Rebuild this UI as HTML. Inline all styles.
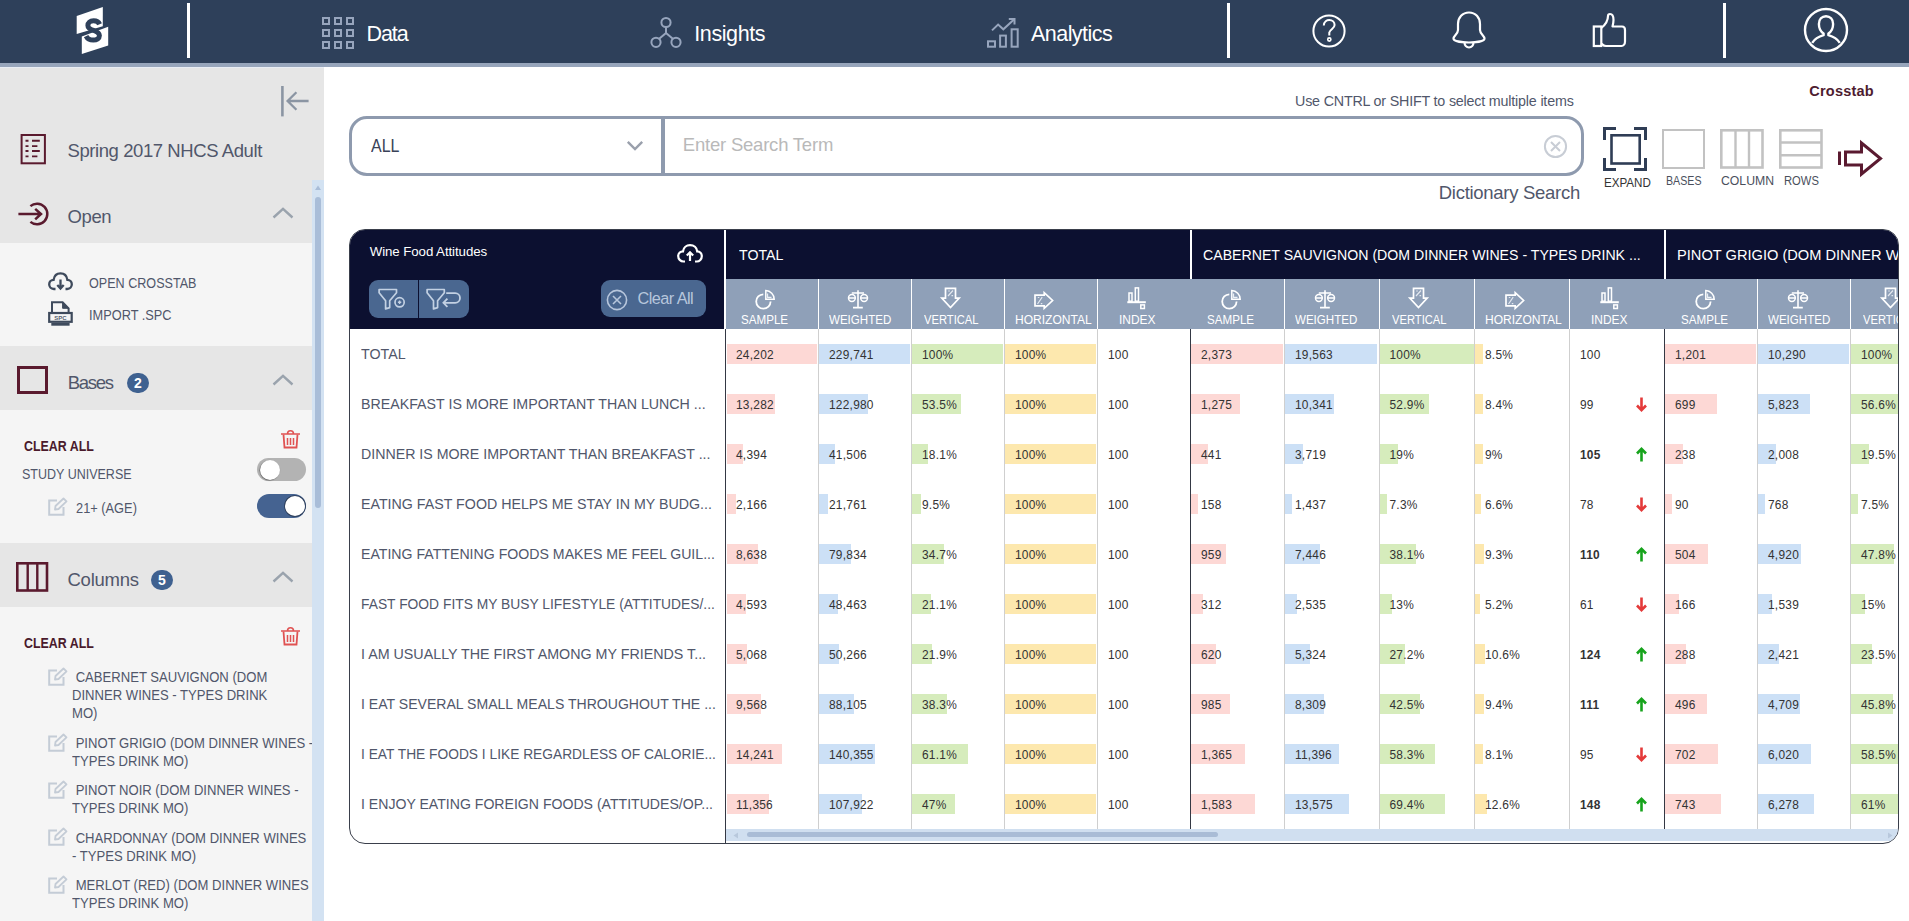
<!DOCTYPE html>
<html><head><meta charset="utf-8"><title>Crosstab</title>
<style>
*{box-sizing:border-box;margin:0;padding:0}
html,body{width:1909px;height:921px;overflow:hidden;background:#fff;font-family:"Liberation Sans", sans-serif;}
.t{position:absolute;line-height:1;white-space:nowrap;}
.a{position:absolute;}
svg{position:absolute;overflow:visible}
</style></head>
<body>
<div class="a" style="left:0;top:0;width:1909px;height:63px;background:#2e405a"></div>
<div class="a" style="left:0;top:63px;width:1909px;height:4px;background:#97a5bb"></div>
<svg style="left:76px;top:7px" width="33" height="48" viewBox="0 0 33 48">
<polygon points="0.7,9.1 26.8,0.1 26.8,19.3 0.7,27" fill="#fff"/>
<polygon points="5.8,29.4 32.2,19.8 32.2,38.6 5.8,47" fill="#fff"/>
<path d="M23.6,17.2 C22.6,14.8 20.4,13.7 17.6,13.7 C14,13.7 11.9,15.7 11.9,18.4 C11.9,21.5 15,22.5 17.6,23.3 C21,24.4 23.4,25.6 23.4,28.6 C23.4,31.4 20.8,33.1 17.3,33.1 C14,33.1 11.4,31.7 10.1,29.1" fill="none" stroke="#2e405a" stroke-width="5"/>
</svg>
<div class="a" style="left:187px;top:3px;width:3px;height:55px;background:#fff"></div>
<div class="a" style="left:1227px;top:3px;width:3px;height:55px;background:#fff"></div>
<div class="a" style="left:1723px;top:3px;width:3px;height:55px;background:#fff"></div>
<svg style="left:322px;top:17px" width="32" height="32" viewBox="0 0 32 32"><rect x="1" y="1" width="6" height="6" fill="none" stroke="#97a5bd" stroke-width="2"/><rect x="1" y="13" width="6" height="6" fill="none" stroke="#97a5bd" stroke-width="2"/><rect x="1" y="25" width="6" height="6" fill="none" stroke="#97a5bd" stroke-width="2"/><rect x="13" y="1" width="6" height="6" fill="none" stroke="#97a5bd" stroke-width="2"/><rect x="13" y="13" width="6" height="6" fill="none" stroke="#97a5bd" stroke-width="2"/><rect x="13" y="25" width="6" height="6" fill="none" stroke="#97a5bd" stroke-width="2"/><rect x="25" y="1" width="6" height="6" fill="none" stroke="#97a5bd" stroke-width="2"/><rect x="25" y="13" width="6" height="6" fill="none" stroke="#97a5bd" stroke-width="2"/><rect x="25" y="25" width="6" height="6" fill="none" stroke="#97a5bd" stroke-width="2"/></svg>
<div class="t" style="left:366.6px;top:23.73px;font-size:21.5px;color:#fff;font-weight:normal;letter-spacing:-1.141px;">Data</div>
<svg style="left:650px;top:17px" width="32" height="31" viewBox="0 0 32 31">
<circle cx="16" cy="5.5" r="4.6" fill="none" stroke="#97a5bd" stroke-width="2"/>
<circle cx="6" cy="25.3" r="4.6" fill="none" stroke="#97a5bd" stroke-width="2"/>
<circle cx="26" cy="25.3" r="4.6" fill="none" stroke="#97a5bd" stroke-width="2"/>
<path d="M16,10.2 V16 L9.2,21.8 M16,16 L22.8,21.8" fill="none" stroke="#97a5bd" stroke-width="2"/>
</svg>
<div class="t" style="left:694.3px;top:23.73px;font-size:21.5px;color:#fff;font-weight:normal;letter-spacing:-0.416px;">Insights</div>
<svg style="left:987px;top:17px" width="33" height="32" viewBox="0 0 33 32">
<rect x="1" y="24.3" width="7" height="5.4" fill="none" stroke="#97a5bd" stroke-width="2"/>
<rect x="13.1" y="18.6" width="5.8" height="11.1" fill="none" stroke="#97a5bd" stroke-width="2"/>
<rect x="24.6" y="12.3" width="6.1" height="17.4" fill="none" stroke="#97a5bd" stroke-width="2"/>
<path d="M5,13.4 L11.1,7.6 L16.3,12.3 L27,2.4" fill="none" stroke="#97a5bd" stroke-width="2"/>
<path d="M21.8,1.9 H27.5 V7.6" fill="none" stroke="#97a5bd" stroke-width="2"/>
</svg>
<div class="t" style="left:1031px;top:23.73px;font-size:21.5px;color:#fff;font-weight:normal;letter-spacing:-0.543px;">Analytics</div>
<svg style="left:1312px;top:14px" width="34" height="34" viewBox="0 0 34 34">
<circle cx="17" cy="17" r="15.6" fill="none" stroke="#fff" stroke-width="2"/>
<path d="M11.8,11.5 C12,7.5 15,6 17.3,6 C20.5,6 22.6,8.3 22.6,11 C22.6,14.5 18.3,15 17.3,18.5 V21.5" fill="none" stroke="#fff" stroke-width="2"/>
<circle cx="17.3" cy="25.5" r="1.6" fill="none" stroke="#fff" stroke-width="1.6"/>
</svg>
<svg style="left:1452px;top:11px" width="34" height="38" viewBox="0 0 34 38">
<path d="M17,1.5 C10.5,1.5 6,6.5 6,13 V19 C6,23 1.5,24.5 1.5,27.5 C1.5,30 9,31.5 17,31.5 C25,31.5 32.5,30 32.5,27.5 C32.5,24.5 28,23 28,19 V13 C28,6.5 23.5,1.5 17,1.5 Z" fill="none" stroke="#fff" stroke-width="2.2"/>
<path d="M12.5,31.3 C12.5,34.5 14.5,36.5 17,36.5 C19.5,36.5 21.5,34.5 21.5,31.3" fill="none" stroke="#fff" stroke-width="2.2"/>
</svg>
<svg style="left:1592px;top:13px" width="35" height="35" viewBox="0 0 35 35">
<rect x="1.8" y="13.5" width="7.5" height="19.5" fill="none" stroke="#fff" stroke-width="2.2"/>
<path d="M9.3,15 C13,12 16,8 16,3 C16,1.5 17,1 18,1 C20.5,1 21.5,4 21.5,7 C21.5,9 21,11.5 20.5,13.5 H30 C32,13.5 33,15 33,17 V28.5 C33,31 31.5,33 29.5,33 H14 C11.5,33 10.5,31.5 9.3,30.5" fill="none" stroke="#fff" stroke-width="2.2" stroke-linejoin="round"/>
</svg>
<svg style="left:1803px;top:7px" width="46" height="46" viewBox="0 0 46 46">
<circle cx="23" cy="23" r="21" fill="none" stroke="#fff" stroke-width="2.4"/>
<path d="M9.2,35.9 C12,31.5 17,29.2 20.6,28.2 V26.4 C18,24.8 15.9,21 15.9,17 C15.9,12.4 18.8,9.3 23,9.3 C27.2,9.3 30.1,12.4 30.1,17 C30.1,21 28,24.8 25.4,26.4 V28.2 C29,29.2 34,31.5 36.8,35.9" fill="none" stroke="#fff" stroke-width="2.4" stroke-linejoin="round"/>
</svg>
<div class="a" style="left:0;top:67px;width:324px;height:854px;background:#e6e6e6"></div>
<div class="a" style="left:0;top:67px;width:324px;height:1px;background:#e9edf4"></div>
<svg style="left:280px;top:85px" width="30" height="32" viewBox="0 0 30 32">
<path d="M2.4,1 V31.4" stroke="#8b95a3" stroke-width="2.6" fill="none"/>
<path d="M8,16 H28.6 M16.4,7.2 L7.6,16 L16.4,24.8" stroke="#8b95a3" stroke-width="2.3" fill="none"/>
</svg>
<svg style="left:20px;top:134px" width="26" height="30" viewBox="0 0 26 30">
<rect x="1.6" y="1" width="23.3" height="28.3" fill="none" stroke="#5a1a2e" stroke-width="2"/>
<path d="M5.5,6.8 H8.5 M12,6.8 H19.8 M5.5,12.1 H8.5 M12,12.1 H17.4 M5.5,17 H8.5 M12,17 H19.8 M5.5,22.4 H8.5 M12,22.4 H17.4" stroke="#5a1a2e" stroke-width="1.9" fill="none"/>
</svg>
<div class="t" style="left:67.5px;top:141.58px;font-size:18.5px;color:#51576b;font-weight:normal;letter-spacing:-0.42px;">Spring 2017 NHCS Adult</div>
<svg style="left:17px;top:201px" width="32" height="26" viewBox="0 0 32 26">
<path d="M13.4,5.1 A10.3,10.3 0 1 1 13.4,20.9" fill="none" stroke="#5a1a2e" stroke-width="2.5"/>
<path d="M1.4,13 H24 M18.2,7.9 L24,13 L18.2,18.3" fill="none" stroke="#5a1a2e" stroke-width="2.5"/>
</svg>
<div class="t" style="left:67.5px;top:207.58px;font-size:18.5px;color:#51576b;font-weight:normal;letter-spacing:-0.389px;">Open</div>
<svg style="left:272px;top:207px" width="22" height="12" viewBox="0 0 22 12"><path d="M1.5,10.5 L11,1.8 L20.5,10.5" fill="none" stroke="#9aa3ad" stroke-width="2.4"/></svg>
<div class="a" style="left:0;top:243px;width:324px;height:103px;background:#f5f5f5"></div>
<svg style="left:47px;top:271px" width="27" height="20" viewBox="0 0 27 20">
<path d="M8.5,18 H6.8 C3.9,18 2.2,15.8 2.2,13.3 C2.2,10.7 4.2,8.8 6.6,8.8 C7.2,4.8 10,2.3 13.5,2.3 C17,2.3 19.8,4.8 20.4,8.8 C22.8,8.8 24.8,10.7 24.8,13.3 C24.8,15.8 23.1,18 20.2,18 H18.5" fill="none" stroke="#3e4a5c" stroke-width="2.3"/>
<path d="M13.5,8.5 V17.5 M10.3,14 L13.5,17.5 L16.7,14" fill="none" stroke="#3e4a5c" stroke-width="2.3"/>
</svg>
<div class="t" style="left:88.6px;top:276.87px;font-size:13.8px;color:#51576b;font-weight:normal;letter-spacing:0px;transform:scaleX(0.9125);transform-origin:0 0;">OPEN CROSSTAB</div>
<svg style="left:47px;top:300px" width="27" height="27" viewBox="0 0 27 27">
<path d="M5,12.5 V2.3 H15.6 L21.6,8.3 V12.5" fill="none" stroke="#3e4a5c" stroke-width="2"/>
<path d="M15.6,2.5 V8.3 H21.4 Z" fill="#3e4a5c" stroke="#3e4a5c" stroke-width="1"/>
<rect x="2.2" y="13" width="22.5" height="8.8" fill="none" stroke="#3e4a5c" stroke-width="2.2"/>
<rect x="4.3" y="23" width="18.3" height="2.7" fill="#3e4a5c"/>
<text x="13.5" y="20.3" font-family="Liberation Sans" font-weight="bold" font-size="6" text-anchor="middle" fill="#55606f">SPC</text>
</svg>
<div class="t" style="left:88.6px;top:309.07px;font-size:13.8px;color:#51576b;font-weight:normal;letter-spacing:0px;transform:scaleX(0.9260);transform-origin:0 0;">IMPORT .SPC</div>
<div class="a" style="left:17px;top:366px;width:31px;height:28px;border:3px solid #5a1a2e"></div>
<div class="t" style="left:67.7px;top:373.77px;font-size:18.5px;color:#51576b;font-weight:normal;letter-spacing:-1.28px;">Bases</div>
<div class="a" style="left:127px;top:373px;width:22px;height:20px;border-radius:10px;background:#3f6190;color:#fff;font:bold 14px/20px 'Liberation Sans';text-align:center">2</div>
<svg style="left:272px;top:373.5px" width="22" height="12" viewBox="0 0 22 12"><path d="M1.5,10.5 L11,1.8 L20.5,10.5" fill="none" stroke="#9aa3ad" stroke-width="2.4"/></svg>
<div class="a" style="left:0;top:410px;width:324px;height:133px;background:#f5f5f5"></div>
<div class="t" style="left:24px;top:439.87px;font-size:13.8px;color:#4a1a2c;font-weight:bold;letter-spacing:0px;transform:scaleX(0.8987);transform-origin:0 0;">CLEAR ALL</div>
<svg style="left:280px;top:429.5px" width="21" height="19" viewBox="0 0 21 19">
<path d="M1,4 H20 M7.5,4 C7.5,1.5 8.5,0.8 10.5,0.8 C12.5,0.8 13.5,1.5 13.5,4" fill="none" stroke="#e05252" stroke-width="1.6"/>
<path d="M3.5,4.5 L4.5,17.5 H16.5 L17.5,4.5" fill="none" stroke="#e05252" stroke-width="1.8"/>
<path d="M7.5,8 V15 M10.5,8 V15 M13.5,8 V15" fill="none" stroke="#e05252" stroke-width="1.5"/>
</svg>
<div class="t" style="left:22.3px;top:467.77px;font-size:13.8px;color:#51576b;font-weight:normal;letter-spacing:0px;transform:scaleX(0.9066);transform-origin:0 0;">STUDY UNIVERSE</div>
<div class="a" style="left:257px;top:458px;width:49px;height:23px;border-radius:12px;background:#b3b3b3"></div>
<div class="a" style="left:259.5px;top:459.5px;width:20px;height:20px;border-radius:50%;background:#fff;box-shadow:-0.5px 0.5px 1px rgba(0,0,0,.5)"></div>
<svg style="left:47.5px;top:497px" width="20" height="19" viewBox="0 0 20 19">
<path d="M9,3.5 H1.2 V17.8 H15.5 V10" fill="none" stroke="#c4ccd6" stroke-width="2"/>
<path d="M7,12.5 L7.5,9 L15.5,1.5 L18.5,4.3 L10.5,12 Z" fill="none" stroke="#c4ccd6" stroke-width="1.8" stroke-linejoin="round"/>
</svg>
<div class="t" style="left:75.8px;top:502.17px;font-size:13.8px;color:#51576b;font-weight:normal;letter-spacing:0px;transform:scaleX(0.9289);transform-origin:0 0;">21+ (AGE)</div>
<div class="a" style="left:257px;top:494px;width:49px;height:24px;border-radius:12px;background:#456391"></div>
<div class="a" style="left:284.5px;top:496px;width:20px;height:20px;border-radius:50%;background:#fff;box-shadow:0 0 0 0.8px #2a3a55"></div>
<svg style="left:16px;top:562px" width="33" height="30" viewBox="0 0 33 30">
<rect x="1.3" y="1.3" width="29.7" height="27.2" fill="none" stroke="#5a1a2e" stroke-width="2.6"/>
<path d="M11.7,1 V29 M21.3,1 V29" stroke="#5a1a2e" stroke-width="2.4" fill="none"/>
</svg>
<div class="t" style="left:67.5px;top:570.87px;font-size:18.5px;color:#51576b;font-weight:normal;letter-spacing:-0.25px;">Columns</div>
<div class="a" style="left:151px;top:570px;width:22px;height:20px;border-radius:10px;background:#3f6190;color:#fff;font:bold 14px/20px 'Liberation Sans';text-align:center">5</div>
<svg style="left:272px;top:570.5px" width="22" height="12" viewBox="0 0 22 12"><path d="M1.5,10.5 L11,1.8 L20.5,10.5" fill="none" stroke="#9aa3ad" stroke-width="2.4"/></svg>
<div class="a" style="left:0;top:607px;width:324px;height:314px;background:#f5f5f5"></div>
<div class="t" style="left:24px;top:636.97px;font-size:13.8px;color:#4a1a2c;font-weight:bold;letter-spacing:0px;transform:scaleX(0.8987);transform-origin:0 0;">CLEAR ALL</div>
<svg style="left:280px;top:626.5px" width="21" height="19" viewBox="0 0 21 19">
<path d="M1,4 H20 M7.5,4 C7.5,1.5 8.5,0.8 10.5,0.8 C12.5,0.8 13.5,1.5 13.5,4" fill="none" stroke="#e05252" stroke-width="1.6"/>
<path d="M3.5,4.5 L4.5,17.5 H16.5 L17.5,4.5" fill="none" stroke="#e05252" stroke-width="1.8"/>
<path d="M7.5,8 V15 M10.5,8 V15 M13.5,8 V15" fill="none" stroke="#e05252" stroke-width="1.5"/>
</svg>
<svg style="left:47.5px;top:666.5px" width="20" height="19" viewBox="0 0 20 19">
<path d="M9,3.5 H1.2 V17.8 H15.5 V10" fill="none" stroke="#c4ccd6" stroke-width="2"/>
<path d="M7,12.5 L7.5,9 L15.5,1.5 L18.5,4.3 L10.5,12 Z" fill="none" stroke="#c4ccd6" stroke-width="1.8" stroke-linejoin="round"/>
</svg>
<div class="t" style="left:71.8px;top:671.07px;font-size:13.8px;color:#51576b;font-weight:normal;letter-spacing:0px;transform:scaleX(0.9485);transform-origin:0 0;">&nbsp;CABERNET SAUVIGNON (DOM</div>
<div class="t" style="left:71.8px;top:688.97px;font-size:13.8px;color:#51576b;font-weight:normal;letter-spacing:0px;transform:scaleX(0.9485);transform-origin:0 0;">DINNER WINES - TYPES DRINK</div>
<div class="t" style="left:71.8px;top:706.87px;font-size:13.8px;color:#51576b;font-weight:normal;letter-spacing:0px;transform:scaleX(0.9485);transform-origin:0 0;">MO)</div>
<svg style="left:47.5px;top:732.5px" width="20" height="19" viewBox="0 0 20 19">
<path d="M9,3.5 H1.2 V17.8 H15.5 V10" fill="none" stroke="#c4ccd6" stroke-width="2"/>
<path d="M7,12.5 L7.5,9 L15.5,1.5 L18.5,4.3 L10.5,12 Z" fill="none" stroke="#c4ccd6" stroke-width="1.8" stroke-linejoin="round"/>
</svg>
<div class="t" style="left:71.8px;top:737.07px;font-size:13.8px;color:#51576b;font-weight:normal;letter-spacing:0px;transform:scaleX(0.9485);transform-origin:0 0;">&nbsp;PINOT GRIGIO (DOM DINNER WINES -</div>
<div class="t" style="left:71.8px;top:754.97px;font-size:13.8px;color:#51576b;font-weight:normal;letter-spacing:0px;transform:scaleX(0.9485);transform-origin:0 0;">TYPES DRINK MO)</div>
<svg style="left:47.5px;top:779.5px" width="20" height="19" viewBox="0 0 20 19">
<path d="M9,3.5 H1.2 V17.8 H15.5 V10" fill="none" stroke="#c4ccd6" stroke-width="2"/>
<path d="M7,12.5 L7.5,9 L15.5,1.5 L18.5,4.3 L10.5,12 Z" fill="none" stroke="#c4ccd6" stroke-width="1.8" stroke-linejoin="round"/>
</svg>
<div class="t" style="left:71.8px;top:784.07px;font-size:13.8px;color:#51576b;font-weight:normal;letter-spacing:0px;transform:scaleX(0.9485);transform-origin:0 0;">&nbsp;PINOT NOIR (DOM DINNER WINES -</div>
<div class="t" style="left:71.8px;top:801.97px;font-size:13.8px;color:#51576b;font-weight:normal;letter-spacing:0px;transform:scaleX(0.9485);transform-origin:0 0;">TYPES DRINK MO)</div>
<svg style="left:47.5px;top:827.3px" width="20" height="19" viewBox="0 0 20 19">
<path d="M9,3.5 H1.2 V17.8 H15.5 V10" fill="none" stroke="#c4ccd6" stroke-width="2"/>
<path d="M7,12.5 L7.5,9 L15.5,1.5 L18.5,4.3 L10.5,12 Z" fill="none" stroke="#c4ccd6" stroke-width="1.8" stroke-linejoin="round"/>
</svg>
<div class="t" style="left:71.8px;top:831.87px;font-size:13.8px;color:#51576b;font-weight:normal;letter-spacing:0px;transform:scaleX(0.9485);transform-origin:0 0;">&nbsp;CHARDONNAY (DOM DINNER WINES</div>
<div class="t" style="left:71.8px;top:849.77px;font-size:13.8px;color:#51576b;font-weight:normal;letter-spacing:0px;transform:scaleX(0.9485);transform-origin:0 0;">- TYPES DRINK MO)</div>
<svg style="left:47.5px;top:874.5px" width="20" height="19" viewBox="0 0 20 19">
<path d="M9,3.5 H1.2 V17.8 H15.5 V10" fill="none" stroke="#c4ccd6" stroke-width="2"/>
<path d="M7,12.5 L7.5,9 L15.5,1.5 L18.5,4.3 L10.5,12 Z" fill="none" stroke="#c4ccd6" stroke-width="1.8" stroke-linejoin="round"/>
</svg>
<div class="t" style="left:71.8px;top:879.07px;font-size:13.8px;color:#51576b;font-weight:normal;letter-spacing:0px;transform:scaleX(0.9485);transform-origin:0 0;">&nbsp;MERLOT (RED) (DOM DINNER WINES -</div>
<div class="t" style="left:71.8px;top:896.97px;font-size:13.8px;color:#51576b;font-weight:normal;letter-spacing:0px;transform:scaleX(0.9485);transform-origin:0 0;">TYPES DRINK MO)</div>
<div class="a" style="left:312px;top:180px;width:12px;height:741px;background:#d3e2f2"></div>
<div class="a" style="left:315px;top:197px;width:6px;height:311px;border-radius:3px;background:#a9bdd8"></div>
<svg style="left:315px;top:185px" width="6" height="5" viewBox="0 0 6 5"><polygon points="0,5 3,0.5 6,5" fill="#a9bdd8"/></svg>
<div class="t" style="left:1295px;top:94.34px;font-size:14.3px;color:#51576b;font-weight:normal;letter-spacing:-0.191px;">Use CNTRL or SHIFT to select multiple items</div>
<div class="t" style="left:1809.3px;top:84.17px;font-size:14.5px;color:#4e1c30;font-weight:bold;letter-spacing:0.206px;">Crosstab</div>
<div class="a" style="left:349px;top:116px;width:1235px;height:60px;border:3px solid #8e9aae;border-radius:18px;background:#fff"></div>
<div class="a" style="left:661px;top:117px;width:4px;height:58px;background:#8e9aae"></div>
<div class="t" style="left:371.3px;top:137.18px;font-size:18.5px;color:#3a4258;font-weight:normal;letter-spacing:0px;transform:scaleX(0.8626);transform-origin:0 0;">ALL</div>
<svg style="left:626px;top:140px" width="18" height="11" viewBox="0 0 18 11"><path d="M1.8,1.8 L9,9 L16.2,1.8" fill="none" stroke="#9aa0ac" stroke-width="2.4"/></svg>
<div class="t" style="left:682.8px;top:135.88px;font-size:18.5px;color:#b9b9b9;font-weight:normal;letter-spacing:-0.212px;">Enter Search Term</div>
<svg style="left:1543px;top:134px" width="25" height="25" viewBox="0 0 25 25">
<circle cx="12.5" cy="12.5" r="10.6" fill="none" stroke="#c8cdd5" stroke-width="2"/>
<path d="M8,8 L17,17 M17,8 L8,17" stroke="#c8cdd5" stroke-width="2"/></svg>
<div class="t" style="left:1438.8px;top:184.28px;font-size:18.5px;color:#51576b;font-weight:normal;letter-spacing:-0.288px;">Dictionary Search</div>
<svg style="left:1603px;top:127px" width="44" height="44" viewBox="0 0 44 44">
<path d="M1.5,13 V1.5 H13 M31,1.5 H42.5 V13 M42.5,31 V42.5 H31 M13,42.5 H1.5 V31" fill="none" stroke="#2f3d55" stroke-width="3"/>
<rect x="8.5" y="8.3" width="28.2" height="28.2" fill="none" stroke="#2f3d55" stroke-width="2.6"/>
</svg>
<div class="t" style="left:1604px;top:176.60px;font-size:12px;color:#333;font-weight:normal;letter-spacing:0px;transform:scaleX(0.9676);transform-origin:0 0;">EXPAND</div>
<div class="a" style="left:1662px;top:129px;width:43px;height:40px;border:2.6px solid #c2c2c2"></div>
<div class="t" style="left:1666.4px;top:174.50px;font-size:12px;color:#4a4f5c;font-weight:normal;letter-spacing:0px;transform:scaleX(0.8868);transform-origin:0 0;">BASES</div>
<svg style="left:1720px;top:129px" width="44" height="40" viewBox="0 0 44 40">
<rect x="1.3" y="1.3" width="41.2" height="37.2" fill="none" stroke="#c2c2c2" stroke-width="2.6"/>
<path d="M15.5,1 V39 M29,1 V39" stroke="#c2c2c2" stroke-width="2.4"/></svg>
<div class="t" style="left:1721px;top:174.70px;font-size:12px;color:#4a4f5c;font-weight:normal;letter-spacing:0px;transform:scaleX(1.0208);transform-origin:0 0;">COLUMN</div>
<svg style="left:1779px;top:129px" width="44" height="40" viewBox="0 0 44 40">
<rect x="1.3" y="1.3" width="41.2" height="37.2" fill="none" stroke="#c2c2c2" stroke-width="2.6"/>
<path d="M1,13.5 H43 M1,26.2 H43" stroke="#c2c2c2" stroke-width="2.4"/></svg>
<div class="t" style="left:1784.3px;top:174.70px;font-size:12px;color:#4a4f5c;font-weight:normal;letter-spacing:0px;transform:scaleX(0.9346);transform-origin:0 0;">ROWS</div>
<svg style="left:1837px;top:140px" width="46" height="38" viewBox="0 0 46 38">
<path d="M2.5,11.5 V25" stroke="#5a1a30" stroke-width="3"/>
<path d="M8.5,12 H24.5 V3 L43.5,18.5 L24.5,34 V25 H8.5 Z" fill="none" stroke="#5a1a30" stroke-width="3" stroke-linejoin="miter"/>
</svg>
<div class="a" style="left:349px;top:229px;width:1550px;height:615px;border-radius:16px;overflow:hidden;border:1px solid #3a3f4b;background:#fff">
<div class="a" style="left:-1px;top:-1px;width:375px;height:100px;background:#0c1030;"></div>
<div class="t" style="left:19.69999999999999px;top:14.50px;font-size:13.3px;color:#fff;font-weight:normal;letter-spacing:-0.083px;">Wine Food Attitudes</div>
<svg style="left:327px;top:14px" width="26" height="19" viewBox="0 0 26 19">
<path d="M8,17.5 H6.5 C3.5,17.5 1.2,15 1.2,12 C1.2,9 3.5,7.3 6,7.3 C6.5,3.5 9.5,1.2 13,1.2 C17,1.2 19.8,3.8 20.2,7.3 C23,7.3 24.8,9.5 24.8,12.2 C24.8,15 22.5,17.5 19.8,17.5 H18" fill="none" stroke="#fff" stroke-width="2.2"/>
<path d="M13,17 V8.5 M9.8,11.5 L13,8.3 L16.2,11.5" fill="none" stroke="#fff" stroke-width="2.2"/>
</svg>
<div class="a" style="left:19px;top:50px;width:100px;height:38px;background:#4a6790;border-radius:9px"></div>
<div class="a" style="left:68px;top:50px;width:1.2px;height:38px;background:#0c1030;"></div>
<svg style="left:28px;top:58px" width="30" height="24" viewBox="0 0 30 24">
<path d="M1.1,1.5 H18.5 V4.7 L11.7,12.8 V19.6 L7.6,20.9 V12.8 L1.1,4.7 Z" fill="none" stroke="#c3d1e3" stroke-width="1.7" stroke-linejoin="round"/>
<circle cx="21.6" cy="14.3" r="4.6" fill="none" stroke="#c3d1e3" stroke-width="1.7"/>
<path d="M21.6,12.6 V16 M19.9,14.3 H23.3" stroke="#c3d1e3" stroke-width="1.4"/>
</svg>
<svg style="left:76px;top:58px" width="36" height="24" viewBox="0 0 36 24">
<path d="M1.1,1.5 H18.3 V4.7 L11.6,12.8 V19.6 L7.5,20.9 V12.8 L1.1,4.7 Z" fill="none" stroke="#c3d1e3" stroke-width="1.7" stroke-linejoin="round"/>
<path d="M20.2,5.2 H29.2 A4.8,4.8 0 0 1 29.2,14.8 H17.8 M21.4,10.7 L17.4,14.8 L21.4,18.9" fill="none" stroke="#c3d1e3" stroke-width="1.8"/>
</svg>
<div class="a" style="left:251px;top:50px;width:105px;height:37px;background:#4a6790;border-radius:9px"></div>
<svg style="left:256px;top:59px" width="22" height="22" viewBox="0 0 22 22">
<circle cx="11" cy="11" r="9.6" fill="none" stroke="#b7c6dc" stroke-width="1.6"/>
<path d="M7,7 L15,15 M15,7 L7,15" stroke="#b7c6dc" stroke-width="1.6"/></svg>
<div class="t" style="left:287.6px;top:60.14px;font-size:16.3px;color:#b7c6dc;font-weight:normal;letter-spacing:-0.578px;">Clear All</div>
<div class="a" style="left:374px;top:-1px;width:1176px;height:50px;background:#0c1030;"></div>
<div class="a" style="left:374px;top:-1px;width:2px;height:100px;background:#fff;"></div>
<div class="a" style="left:840px;top:-1px;width:2px;height:100px;background:#fff;"></div>
<div class="a" style="left:1314px;top:-1px;width:2px;height:100px;background:#fff;"></div>
<div class="a" style="left:376px;top:49px;width:1174px;height:50px;background:#8fa0b8;"></div>
<div class="t" style="left:388.5px;top:16.63px;font-size:15.5px;color:#fff;font-weight:normal;letter-spacing:0px;transform:scaleX(0.913);transform-origin:0 0;">TOTAL</div>
<div class="a" style="left:468px;top:49px;width:1.3px;height:50px;background:#fff;"></div>
<svg style="left:405px;top:59px" width="20" height="20" viewBox="0 0 20 20">
<path d="M8.3,5.3 A7.2,7.2 0 1 0 15.6,12.6" fill="none" stroke="#fff" stroke-width="1.8"/>
<path d="M10.8,1.6 V10.2 H19.2 A8.6,8.6 0 0 0 10.8,1.6 Z" fill="none" stroke="#fff" stroke-width="1.5"/>
<path d="M12.6,4.5 V8.4 H16.5" fill="none" stroke="#eef2f7" stroke-width="1.1"/>
</svg>
<div class="t" style="left:391.45000000000005px;top:83.60px;font-size:12px;color:#fff;font-weight:normal;letter-spacing:0px;transform:scaleX(0.9674);transform-origin:0 0;">SAMPLE</div>
<div class="a" style="left:561px;top:49px;width:1.3px;height:50px;background:#fff;"></div>
<svg style="left:498px;top:60px" width="20" height="19" viewBox="0 0 20 19">
<path d="M10,0.3 V17 M5,17.6 H14.8 M3.8,3 H16" fill="none" stroke="#fff" stroke-width="1.6"/>
<circle cx="3.9" cy="8" r="3.4" fill="none" stroke="#fff" stroke-width="1.5"/>
<circle cx="16.1" cy="8" r="3.4" fill="none" stroke="#fff" stroke-width="1.5"/>
<path d="M0.5,8 H7.3 M12.7,8 H19.5" fill="none" stroke="#fff" stroke-width="1.3"/>
</svg>
<div class="t" style="left:478.85px;top:83.60px;font-size:12px;color:#fff;font-weight:normal;letter-spacing:0px;transform:scaleX(0.9633);transform-origin:0 0;">WEIGHTED</div>
<div class="a" style="left:654px;top:49px;width:1.3px;height:50px;background:#fff;"></div>
<svg style="left:591px;top:57px" width="20" height="22" viewBox="0 0 20 22">
<path d="M4.5,1.3 H14.5 V11.2 H18.2 L9.5,20.6 L0.8,11.2 H4.5 Z" fill="none" stroke="#fff" stroke-width="1.7" stroke-linejoin="miter"/>
<path d="M7,9 L12,3.5 M7.2,4 h1.6 M10.5,8.6 h1.6" fill="none" stroke="#e4e9f0" stroke-width="1.2"/>
</svg>
<div class="t" style="left:573.75px;top:83.60px;font-size:12px;color:#fff;font-weight:normal;letter-spacing:0px;transform:scaleX(0.9321);transform-origin:0 0;">VERTICAL</div>
<div class="a" style="left:747px;top:49px;width:1.3px;height:50px;background:#fff;"></div>
<svg style="left:684px;top:61.5px" width="20" height="17" viewBox="0 0 20 17">
<path d="M1,3.2 H10.2 V0.7 L18.6,8.5 L10.2,16.3 V13.8 H1 Z" fill="none" stroke="#fff" stroke-width="1.7" stroke-linejoin="miter"/>
<path d="M3.5,12 L8.2,5.2 M3.8,5.5 h1.5 M6.8,11.6 h1.5" fill="none" stroke="#e4e9f0" stroke-width="1.2"/>
</svg>
<div class="t" style="left:665px;top:83.60px;font-size:12px;color:#fff;font-weight:normal;letter-spacing:0px;transform:scaleX(1.0032);transform-origin:0 0;">HORIZONTAL</div>
<svg style="left:777px;top:57px" width="20" height="23" viewBox="0 0 20 23">
<rect x="2" y="6" width="3" height="8.2" fill="none" stroke="#fff" stroke-width="1.5"/>
<rect x="8.3" y="0.9" width="3.2" height="13.3" fill="none" stroke="#fff" stroke-width="1.5"/>
<path d="M0.3,15.2 H18.8" stroke="#fff" stroke-width="2"/>
<rect x="13.8" y="17.9" width="3.6" height="3.6" fill="none" stroke="#fff" stroke-width="1.5"/>
</svg>
<div class="t" style="left:768.75px;top:83.60px;font-size:12px;color:#fff;font-weight:normal;letter-spacing:0px;transform:scaleX(0.9949);transform-origin:0 0;">INDEX</div>
<div class="t" style="left:853px;top:16.63px;font-size:15.5px;color:#fff;font-weight:normal;letter-spacing:0px;transform:scaleX(0.912);transform-origin:0 0;">CABERNET SAUVIGNON (DOM DINNER WINES - TYPES DRINK ...</div>
<div class="a" style="left:934px;top:49px;width:1.3px;height:50px;background:#fff;"></div>
<svg style="left:870.5px;top:59px" width="20" height="20" viewBox="0 0 20 20">
<path d="M8.3,5.3 A7.2,7.2 0 1 0 15.6,12.6" fill="none" stroke="#fff" stroke-width="1.8"/>
<path d="M10.8,1.6 V10.2 H19.2 A8.6,8.6 0 0 0 10.8,1.6 Z" fill="none" stroke="#fff" stroke-width="1.5"/>
<path d="M12.6,4.5 V8.4 H16.5" fill="none" stroke="#eef2f7" stroke-width="1.1"/>
</svg>
<div class="t" style="left:856.95px;top:83.60px;font-size:12px;color:#fff;font-weight:normal;letter-spacing:0px;transform:scaleX(0.9674);transform-origin:0 0;">SAMPLE</div>
<div class="a" style="left:1028.5px;top:49px;width:1.3px;height:50px;background:#fff;"></div>
<svg style="left:964.5px;top:60px" width="20" height="19" viewBox="0 0 20 19">
<path d="M10,0.3 V17 M5,17.6 H14.8 M3.8,3 H16" fill="none" stroke="#fff" stroke-width="1.6"/>
<circle cx="3.9" cy="8" r="3.4" fill="none" stroke="#fff" stroke-width="1.5"/>
<circle cx="16.1" cy="8" r="3.4" fill="none" stroke="#fff" stroke-width="1.5"/>
<path d="M0.5,8 H7.3 M12.7,8 H19.5" fill="none" stroke="#fff" stroke-width="1.3"/>
</svg>
<div class="t" style="left:945.3499999999999px;top:83.60px;font-size:12px;color:#fff;font-weight:normal;letter-spacing:0px;transform:scaleX(0.9633);transform-origin:0 0;">WEIGHTED</div>
<div class="a" style="left:1124px;top:49px;width:1.3px;height:50px;background:#fff;"></div>
<svg style="left:1059.0px;top:57px" width="20" height="22" viewBox="0 0 20 22">
<path d="M4.5,1.3 H14.5 V11.2 H18.2 L9.5,20.6 L0.8,11.2 H4.5 Z" fill="none" stroke="#fff" stroke-width="1.7" stroke-linejoin="miter"/>
<path d="M7,9 L12,3.5 M7.2,4 h1.6 M10.5,8.6 h1.6" fill="none" stroke="#e4e9f0" stroke-width="1.2"/>
</svg>
<div class="t" style="left:1041.75px;top:83.60px;font-size:12px;color:#fff;font-weight:normal;letter-spacing:0px;transform:scaleX(0.9321);transform-origin:0 0;">VERTICAL</div>
<div class="a" style="left:1219px;top:49px;width:1.3px;height:50px;background:#fff;"></div>
<svg style="left:1154.5px;top:61.5px" width="20" height="17" viewBox="0 0 20 17">
<path d="M1,3.2 H10.2 V0.7 L18.6,8.5 L10.2,16.3 V13.8 H1 Z" fill="none" stroke="#fff" stroke-width="1.7" stroke-linejoin="miter"/>
<path d="M3.5,12 L8.2,5.2 M3.8,5.5 h1.5 M6.8,11.6 h1.5" fill="none" stroke="#e4e9f0" stroke-width="1.2"/>
</svg>
<div class="t" style="left:1135px;top:83.60px;font-size:12px;color:#fff;font-weight:normal;letter-spacing:0px;transform:scaleX(1.0032);transform-origin:0 0;">HORIZONTAL</div>
<svg style="left:1249.5px;top:57px" width="20" height="23" viewBox="0 0 20 23">
<rect x="2" y="6" width="3" height="8.2" fill="none" stroke="#fff" stroke-width="1.5"/>
<rect x="8.3" y="0.9" width="3.2" height="13.3" fill="none" stroke="#fff" stroke-width="1.5"/>
<path d="M0.3,15.2 H18.8" stroke="#fff" stroke-width="2"/>
<rect x="13.8" y="17.9" width="3.6" height="3.6" fill="none" stroke="#fff" stroke-width="1.5"/>
</svg>
<div class="t" style="left:1241.25px;top:83.60px;font-size:12px;color:#fff;font-weight:normal;letter-spacing:0px;transform:scaleX(0.9949);transform-origin:0 0;">INDEX</div>
<div class="t" style="left:1326.8px;top:16.63px;font-size:15.5px;color:#fff;font-weight:normal;letter-spacing:0px;transform:scaleX(0.944);transform-origin:0 0;">PINOT GRIGIO (DOM DINNER WINES - TYPES DRINK MO)</div>
<div class="a" style="left:1407px;top:49px;width:1.3px;height:50px;background:#fff;"></div>
<svg style="left:1344.5px;top:59px" width="20" height="20" viewBox="0 0 20 20">
<path d="M8.3,5.3 A7.2,7.2 0 1 0 15.6,12.6" fill="none" stroke="#fff" stroke-width="1.8"/>
<path d="M10.8,1.6 V10.2 H19.2 A8.6,8.6 0 0 0 10.8,1.6 Z" fill="none" stroke="#fff" stroke-width="1.5"/>
<path d="M12.6,4.5 V8.4 H16.5" fill="none" stroke="#eef2f7" stroke-width="1.1"/>
</svg>
<div class="t" style="left:1330.95px;top:83.60px;font-size:12px;color:#fff;font-weight:normal;letter-spacing:0px;transform:scaleX(0.9674);transform-origin:0 0;">SAMPLE</div>
<div class="a" style="left:1500px;top:49px;width:1.3px;height:50px;background:#fff;"></div>
<svg style="left:1437.5px;top:60px" width="20" height="19" viewBox="0 0 20 19">
<path d="M10,0.3 V17 M5,17.6 H14.8 M3.8,3 H16" fill="none" stroke="#fff" stroke-width="1.6"/>
<circle cx="3.9" cy="8" r="3.4" fill="none" stroke="#fff" stroke-width="1.5"/>
<circle cx="16.1" cy="8" r="3.4" fill="none" stroke="#fff" stroke-width="1.5"/>
<path d="M0.5,8 H7.3 M12.7,8 H19.5" fill="none" stroke="#fff" stroke-width="1.3"/>
</svg>
<div class="t" style="left:1418.35px;top:83.60px;font-size:12px;color:#fff;font-weight:normal;letter-spacing:0px;transform:scaleX(0.9633);transform-origin:0 0;">WEIGHTED</div>
<div class="a" style="left:1593px;top:49px;width:1.3px;height:50px;background:#fff;"></div>
<svg style="left:1530.5px;top:57px" width="20" height="22" viewBox="0 0 20 22">
<path d="M4.5,1.3 H14.5 V11.2 H18.2 L9.5,20.6 L0.8,11.2 H4.5 Z" fill="none" stroke="#fff" stroke-width="1.7" stroke-linejoin="miter"/>
<path d="M7,9 L12,3.5 M7.2,4 h1.6 M10.5,8.6 h1.6" fill="none" stroke="#e4e9f0" stroke-width="1.2"/>
</svg>
<div class="t" style="left:1513.25px;top:83.60px;font-size:12px;color:#fff;font-weight:normal;letter-spacing:0px;transform:scaleX(0.9321);transform-origin:0 0;">VERTICAL</div>
<div class="a" style="left:375px;top:99px;width:1px;height:515px;background:#343844;"></div>
<div class="a" style="left:840px;top:99px;width:1px;height:500px;background:#343844;"></div>
<div class="a" style="left:1314px;top:99px;width:1px;height:500px;background:#343844;"></div>
<div class="a" style="left:468px;top:99px;width:1px;height:500px;background:#cfcfcf;"></div>
<div class="a" style="left:561px;top:99px;width:1px;height:500px;background:#cfcfcf;"></div>
<div class="a" style="left:654px;top:99px;width:1px;height:500px;background:#cfcfcf;"></div>
<div class="a" style="left:747px;top:99px;width:1px;height:500px;background:#cfcfcf;"></div>
<div class="a" style="left:934px;top:99px;width:1px;height:500px;background:#cfcfcf;"></div>
<div class="a" style="left:1028.5px;top:99px;width:1px;height:500px;background:#cfcfcf;"></div>
<div class="a" style="left:1124px;top:99px;width:1px;height:500px;background:#cfcfcf;"></div>
<div class="a" style="left:1219px;top:99px;width:1px;height:500px;background:#cfcfcf;"></div>
<div class="a" style="left:1407px;top:99px;width:1px;height:500px;background:#cfcfcf;"></div>
<div class="a" style="left:1500px;top:99px;width:1px;height:500px;background:#cfcfcf;"></div>
<div class="a" style="left:1593px;top:99px;width:1px;height:500px;background:#cfcfcf;"></div>
<div class="t" style="left:11.199999999999989px;top:115.98px;font-size:15.2px;color:#51576b;font-weight:normal;letter-spacing:0px;transform:scaleX(0.9380);transform-origin:0 0;">TOTAL</div>
<div class="a" style="left:377px;top:114px;width:90px;height:20px;background:#fdd8d5;"></div>
<div class="t" style="left:386px;top:119.68px;font-size:11.9px;color:#333;font-weight:normal;letter-spacing:0.25px;">24,202</div>
<div class="a" style="left:469px;top:114px;width:91px;height:20px;background:#cce0f6;"></div>
<div class="t" style="left:479px;top:119.68px;font-size:11.9px;color:#333;font-weight:normal;letter-spacing:0.25px;">229,741</div>
<div class="a" style="left:562px;top:114px;width:91px;height:20px;background:#d6ecbc;"></div>
<div class="t" style="left:572px;top:119.68px;font-size:11.9px;color:#333;font-weight:normal;letter-spacing:0.25px;">100%</div>
<div class="a" style="left:655px;top:114px;width:91px;height:20px;background:#fde8ae;"></div>
<div class="t" style="left:665px;top:119.68px;font-size:11.9px;color:#333;font-weight:normal;letter-spacing:0.25px;">100%</div>
<div class="t" style="left:758px;top:119.68px;font-size:11.9px;color:#333;font-weight:normal;letter-spacing:0.25px;">100</div>
<div class="a" style="left:841px;top:114px;width:92px;height:20px;background:#fdd8d5;"></div>
<div class="t" style="left:851px;top:119.68px;font-size:11.9px;color:#333;font-weight:normal;letter-spacing:0.25px;">2,373</div>
<div class="a" style="left:935px;top:114px;width:92px;height:20px;background:#cce0f6;"></div>
<div class="t" style="left:945px;top:119.68px;font-size:11.9px;color:#333;font-weight:normal;letter-spacing:0.25px;">19,563</div>
<div class="a" style="left:1029.5px;top:114px;width:94px;height:20px;background:#d6ecbc;"></div>
<div class="t" style="left:1039.5px;top:119.68px;font-size:11.9px;color:#333;font-weight:normal;letter-spacing:0.25px;">100%</div>
<div class="a" style="left:1125px;top:114px;width:8px;height:20px;background:#fde8ae;"></div>
<div class="t" style="left:1135px;top:119.68px;font-size:11.9px;color:#333;font-weight:normal;letter-spacing:0.25px;">8.5%</div>
<div class="t" style="left:1230px;top:119.68px;font-size:11.9px;color:#333;font-weight:normal;letter-spacing:0.25px;">100</div>
<div class="a" style="left:1315px;top:114px;width:91px;height:20px;background:#fdd8d5;"></div>
<div class="t" style="left:1325px;top:119.68px;font-size:11.9px;color:#333;font-weight:normal;letter-spacing:0.25px;">1,201</div>
<div class="a" style="left:1408px;top:114px;width:91px;height:20px;background:#cce0f6;"></div>
<div class="t" style="left:1418px;top:119.68px;font-size:11.9px;color:#333;font-weight:normal;letter-spacing:0.25px;">10,290</div>
<div class="a" style="left:1501px;top:114px;width:91px;height:20px;background:#d6ecbc;"></div>
<div class="t" style="left:1511px;top:119.68px;font-size:11.9px;color:#333;font-weight:normal;letter-spacing:0.25px;">100%</div>
<div class="t" style="left:11.199999999999989px;top:165.98px;font-size:15.2px;color:#51576b;font-weight:normal;letter-spacing:0px;transform:scaleX(0.9361);transform-origin:0 0;">BREAKFAST IS MORE IMPORTANT THAN LUNCH ...</div>
<div class="a" style="left:377px;top:164px;width:48px;height:20px;background:#fdd8d5;"></div>
<div class="t" style="left:386px;top:169.68px;font-size:11.9px;color:#333;font-weight:normal;letter-spacing:0.25px;">13,282</div>
<div class="a" style="left:469px;top:164px;width:49px;height:20px;background:#cce0f6;"></div>
<div class="t" style="left:479px;top:169.68px;font-size:11.9px;color:#333;font-weight:normal;letter-spacing:0.25px;">122,980</div>
<div class="a" style="left:562px;top:164px;width:49px;height:20px;background:#d6ecbc;"></div>
<div class="t" style="left:572px;top:169.68px;font-size:11.9px;color:#333;font-weight:normal;letter-spacing:0.25px;">53.5%</div>
<div class="a" style="left:655px;top:164px;width:91px;height:20px;background:#fde8ae;"></div>
<div class="t" style="left:665px;top:169.68px;font-size:11.9px;color:#333;font-weight:normal;letter-spacing:0.25px;">100%</div>
<div class="t" style="left:758px;top:169.68px;font-size:11.9px;color:#333;font-weight:normal;letter-spacing:0.25px;">100</div>
<div class="a" style="left:841px;top:164px;width:49px;height:20px;background:#fdd8d5;"></div>
<div class="t" style="left:851px;top:169.68px;font-size:11.9px;color:#333;font-weight:normal;letter-spacing:0.25px;">1,275</div>
<div class="a" style="left:935px;top:164px;width:49px;height:20px;background:#cce0f6;"></div>
<div class="t" style="left:945px;top:169.68px;font-size:11.9px;color:#333;font-weight:normal;letter-spacing:0.25px;">10,341</div>
<div class="a" style="left:1029.5px;top:164px;width:49px;height:20px;background:#d6ecbc;"></div>
<div class="t" style="left:1039.5px;top:169.68px;font-size:11.9px;color:#333;font-weight:normal;letter-spacing:0.25px;">52.9%</div>
<div class="a" style="left:1125px;top:164px;width:8px;height:20px;background:#fde8ae;"></div>
<div class="t" style="left:1135px;top:169.68px;font-size:11.9px;color:#333;font-weight:normal;letter-spacing:0.25px;">8.4%</div>
<div class="t" style="left:1230px;top:169.68px;font-size:11.9px;color:#333;font-weight:normal;letter-spacing:0.25px;">99</div>
<svg style="left:1286px;top:167px" width="11" height="15" viewBox="0 0 11 15"><path d="M5.5,0.5 V13 M1,8.5 L5.5,13.2 L10,8.5" fill="none" stroke="#e43a3a" stroke-width="2.6"/></svg>
<div class="a" style="left:1315px;top:164px;width:52px;height:20px;background:#fdd8d5;"></div>
<div class="t" style="left:1325px;top:169.68px;font-size:11.9px;color:#333;font-weight:normal;letter-spacing:0.25px;">699</div>
<div class="a" style="left:1408px;top:164px;width:52px;height:20px;background:#cce0f6;"></div>
<div class="t" style="left:1418px;top:169.68px;font-size:11.9px;color:#333;font-weight:normal;letter-spacing:0.25px;">5,823</div>
<div class="a" style="left:1501px;top:164px;width:52px;height:20px;background:#d6ecbc;"></div>
<div class="t" style="left:1511px;top:169.68px;font-size:11.9px;color:#333;font-weight:normal;letter-spacing:0.25px;">56.6%</div>
<div class="t" style="left:11.199999999999989px;top:215.98px;font-size:15.2px;color:#51576b;font-weight:normal;letter-spacing:0px;transform:scaleX(0.9342);transform-origin:0 0;">DINNER IS MORE IMPORTANT THAN BREAKFAST ...</div>
<div class="a" style="left:377px;top:214px;width:16px;height:20px;background:#fdd8d5;"></div>
<div class="t" style="left:386px;top:219.68px;font-size:11.9px;color:#333;font-weight:normal;letter-spacing:0.25px;">4,394</div>
<div class="a" style="left:469px;top:214px;width:16px;height:20px;background:#cce0f6;"></div>
<div class="t" style="left:479px;top:219.68px;font-size:11.9px;color:#333;font-weight:normal;letter-spacing:0.25px;">41,506</div>
<div class="a" style="left:562px;top:214px;width:16px;height:20px;background:#d6ecbc;"></div>
<div class="t" style="left:572px;top:219.68px;font-size:11.9px;color:#333;font-weight:normal;letter-spacing:0.25px;">18.1%</div>
<div class="a" style="left:655px;top:214px;width:91px;height:20px;background:#fde8ae;"></div>
<div class="t" style="left:665px;top:219.68px;font-size:11.9px;color:#333;font-weight:normal;letter-spacing:0.25px;">100%</div>
<div class="t" style="left:758px;top:219.68px;font-size:11.9px;color:#333;font-weight:normal;letter-spacing:0.25px;">100</div>
<div class="a" style="left:841px;top:214px;width:17px;height:20px;background:#fdd8d5;"></div>
<div class="t" style="left:851px;top:219.68px;font-size:11.9px;color:#333;font-weight:normal;letter-spacing:0.25px;">441</div>
<div class="a" style="left:935px;top:214px;width:18px;height:20px;background:#cce0f6;"></div>
<div class="t" style="left:945px;top:219.68px;font-size:11.9px;color:#333;font-weight:normal;letter-spacing:0.25px;">3,719</div>
<div class="a" style="left:1029.5px;top:214px;width:18px;height:20px;background:#d6ecbc;"></div>
<div class="t" style="left:1039.5px;top:219.68px;font-size:11.9px;color:#333;font-weight:normal;letter-spacing:0.25px;">19%</div>
<div class="a" style="left:1125px;top:214px;width:8px;height:20px;background:#fde8ae;"></div>
<div class="t" style="left:1135px;top:219.68px;font-size:11.9px;color:#333;font-weight:normal;letter-spacing:0.25px;">9%</div>
<div class="t" style="left:1230px;top:219.68px;font-size:11.9px;color:#333;font-weight:bold;letter-spacing:0.25px;">105</div>
<svg style="left:1286px;top:217px" width="11" height="15" viewBox="0 0 11 15"><path d="M5.5,14.5 V2 M1,6.5 L5.5,1.8 L10,6.5" fill="none" stroke="#17a31c" stroke-width="2.6"/></svg>
<div class="a" style="left:1315px;top:214px;width:18px;height:20px;background:#fdd8d5;"></div>
<div class="t" style="left:1325px;top:219.68px;font-size:11.9px;color:#333;font-weight:normal;letter-spacing:0.25px;">238</div>
<div class="a" style="left:1408px;top:214px;width:18px;height:20px;background:#cce0f6;"></div>
<div class="t" style="left:1418px;top:219.68px;font-size:11.9px;color:#333;font-weight:normal;letter-spacing:0.25px;">2,008</div>
<div class="a" style="left:1501px;top:214px;width:18px;height:20px;background:#d6ecbc;"></div>
<div class="t" style="left:1511px;top:219.68px;font-size:11.9px;color:#333;font-weight:normal;letter-spacing:0.25px;">19.5%</div>
<div class="t" style="left:11.199999999999989px;top:265.98px;font-size:15.2px;color:#51576b;font-weight:normal;letter-spacing:0px;transform:scaleX(0.9367);transform-origin:0 0;">EATING FAST FOOD HELPS ME STAY IN MY BUDG...</div>
<div class="a" style="left:377px;top:264px;width:9px;height:20px;background:#fdd8d5;"></div>
<div class="t" style="left:386px;top:269.68px;font-size:11.9px;color:#333;font-weight:normal;letter-spacing:0.25px;">2,166</div>
<div class="a" style="left:469px;top:264px;width:9px;height:20px;background:#cce0f6;"></div>
<div class="t" style="left:479px;top:269.68px;font-size:11.9px;color:#333;font-weight:normal;letter-spacing:0.25px;">21,761</div>
<div class="a" style="left:562px;top:264px;width:9px;height:20px;background:#d6ecbc;"></div>
<div class="t" style="left:572px;top:269.68px;font-size:11.9px;color:#333;font-weight:normal;letter-spacing:0.25px;">9.5%</div>
<div class="a" style="left:655px;top:264px;width:91px;height:20px;background:#fde8ae;"></div>
<div class="t" style="left:665px;top:269.68px;font-size:11.9px;color:#333;font-weight:normal;letter-spacing:0.25px;">100%</div>
<div class="t" style="left:758px;top:269.68px;font-size:11.9px;color:#333;font-weight:normal;letter-spacing:0.25px;">100</div>
<div class="a" style="left:841px;top:264px;width:7px;height:20px;background:#fdd8d5;"></div>
<div class="t" style="left:851px;top:269.68px;font-size:11.9px;color:#333;font-weight:normal;letter-spacing:0.25px;">158</div>
<div class="a" style="left:935px;top:264px;width:7px;height:20px;background:#cce0f6;"></div>
<div class="t" style="left:945px;top:269.68px;font-size:11.9px;color:#333;font-weight:normal;letter-spacing:0.25px;">1,437</div>
<div class="a" style="left:1029.5px;top:264px;width:7px;height:20px;background:#d6ecbc;"></div>
<div class="t" style="left:1039.5px;top:269.68px;font-size:11.9px;color:#333;font-weight:normal;letter-spacing:0.25px;">7.3%</div>
<div class="a" style="left:1125px;top:264px;width:6px;height:20px;background:#fde8ae;"></div>
<div class="t" style="left:1135px;top:269.68px;font-size:11.9px;color:#333;font-weight:normal;letter-spacing:0.25px;">6.6%</div>
<div class="t" style="left:1230px;top:269.68px;font-size:11.9px;color:#333;font-weight:normal;letter-spacing:0.25px;">78</div>
<svg style="left:1286px;top:267px" width="11" height="15" viewBox="0 0 11 15"><path d="M5.5,0.5 V13 M1,8.5 L5.5,13.2 L10,8.5" fill="none" stroke="#e43a3a" stroke-width="2.6"/></svg>
<div class="a" style="left:1315px;top:264px;width:7px;height:20px;background:#fdd8d5;"></div>
<div class="t" style="left:1325px;top:269.68px;font-size:11.9px;color:#333;font-weight:normal;letter-spacing:0.25px;">90</div>
<div class="a" style="left:1408px;top:264px;width:7px;height:20px;background:#cce0f6;"></div>
<div class="t" style="left:1418px;top:269.68px;font-size:11.9px;color:#333;font-weight:normal;letter-spacing:0.25px;">768</div>
<div class="a" style="left:1501px;top:264px;width:7px;height:20px;background:#d6ecbc;"></div>
<div class="t" style="left:1511px;top:269.68px;font-size:11.9px;color:#333;font-weight:normal;letter-spacing:0.25px;">7.5%</div>
<div class="t" style="left:11.199999999999989px;top:315.98px;font-size:15.2px;color:#51576b;font-weight:normal;letter-spacing:0px;transform:scaleX(0.9306);transform-origin:0 0;">EATING FATTENING FOODS MAKES ME FEEL GUIL...</div>
<div class="a" style="left:377px;top:314px;width:31px;height:20px;background:#fdd8d5;"></div>
<div class="t" style="left:386px;top:319.68px;font-size:11.9px;color:#333;font-weight:normal;letter-spacing:0.25px;">8,638</div>
<div class="a" style="left:469px;top:314px;width:32px;height:20px;background:#cce0f6;"></div>
<div class="t" style="left:479px;top:319.68px;font-size:11.9px;color:#333;font-weight:normal;letter-spacing:0.25px;">79,834</div>
<div class="a" style="left:562px;top:314px;width:32px;height:20px;background:#d6ecbc;"></div>
<div class="t" style="left:572px;top:319.68px;font-size:11.9px;color:#333;font-weight:normal;letter-spacing:0.25px;">34.7%</div>
<div class="a" style="left:655px;top:314px;width:91px;height:20px;background:#fde8ae;"></div>
<div class="t" style="left:665px;top:319.68px;font-size:11.9px;color:#333;font-weight:normal;letter-spacing:0.25px;">100%</div>
<div class="t" style="left:758px;top:319.68px;font-size:11.9px;color:#333;font-weight:normal;letter-spacing:0.25px;">100</div>
<div class="a" style="left:841px;top:314px;width:35px;height:20px;background:#fdd8d5;"></div>
<div class="t" style="left:851px;top:319.68px;font-size:11.9px;color:#333;font-weight:normal;letter-spacing:0.25px;">959</div>
<div class="a" style="left:935px;top:314px;width:35px;height:20px;background:#cce0f6;"></div>
<div class="t" style="left:945px;top:319.68px;font-size:11.9px;color:#333;font-weight:normal;letter-spacing:0.25px;">7,446</div>
<div class="a" style="left:1029.5px;top:314px;width:36px;height:20px;background:#d6ecbc;"></div>
<div class="t" style="left:1039.5px;top:319.68px;font-size:11.9px;color:#333;font-weight:normal;letter-spacing:0.25px;">38.1%</div>
<div class="a" style="left:1125px;top:314px;width:9px;height:20px;background:#fde8ae;"></div>
<div class="t" style="left:1135px;top:319.68px;font-size:11.9px;color:#333;font-weight:normal;letter-spacing:0.25px;">9.3%</div>
<div class="t" style="left:1230px;top:319.68px;font-size:11.9px;color:#333;font-weight:bold;letter-spacing:0.25px;">110</div>
<svg style="left:1286px;top:317px" width="11" height="15" viewBox="0 0 11 15"><path d="M5.5,14.5 V2 M1,6.5 L5.5,1.8 L10,6.5" fill="none" stroke="#17a31c" stroke-width="2.6"/></svg>
<div class="a" style="left:1315px;top:314px;width:43px;height:20px;background:#fdd8d5;"></div>
<div class="t" style="left:1325px;top:319.68px;font-size:11.9px;color:#333;font-weight:normal;letter-spacing:0.25px;">504</div>
<div class="a" style="left:1408px;top:314px;width:43px;height:20px;background:#cce0f6;"></div>
<div class="t" style="left:1418px;top:319.68px;font-size:11.9px;color:#333;font-weight:normal;letter-spacing:0.25px;">4,920</div>
<div class="a" style="left:1501px;top:314px;width:43px;height:20px;background:#d6ecbc;"></div>
<div class="t" style="left:1511px;top:319.68px;font-size:11.9px;color:#333;font-weight:normal;letter-spacing:0.25px;">47.8%</div>
<div class="t" style="left:11.199999999999989px;top:365.98px;font-size:15.2px;color:#51576b;font-weight:normal;letter-spacing:0px;transform:scaleX(0.9103);transform-origin:0 0;">FAST FOOD FITS MY BUSY LIFESTYLE (ATTITUDES/...</div>
<div class="a" style="left:377px;top:364px;width:19px;height:20px;background:#fdd8d5;"></div>
<div class="t" style="left:386px;top:369.68px;font-size:11.9px;color:#333;font-weight:normal;letter-spacing:0.25px;">4,593</div>
<div class="a" style="left:469px;top:364px;width:19px;height:20px;background:#cce0f6;"></div>
<div class="t" style="left:479px;top:369.68px;font-size:11.9px;color:#333;font-weight:normal;letter-spacing:0.25px;">48,463</div>
<div class="a" style="left:562px;top:364px;width:19px;height:20px;background:#d6ecbc;"></div>
<div class="t" style="left:572px;top:369.68px;font-size:11.9px;color:#333;font-weight:normal;letter-spacing:0.25px;">21.1%</div>
<div class="a" style="left:655px;top:364px;width:91px;height:20px;background:#fde8ae;"></div>
<div class="t" style="left:665px;top:369.68px;font-size:11.9px;color:#333;font-weight:normal;letter-spacing:0.25px;">100%</div>
<div class="t" style="left:758px;top:369.68px;font-size:11.9px;color:#333;font-weight:normal;letter-spacing:0.25px;">100</div>
<div class="a" style="left:841px;top:364px;width:12px;height:20px;background:#fdd8d5;"></div>
<div class="t" style="left:851px;top:369.68px;font-size:11.9px;color:#333;font-weight:normal;letter-spacing:0.25px;">312</div>
<div class="a" style="left:935px;top:364px;width:12px;height:20px;background:#cce0f6;"></div>
<div class="t" style="left:945px;top:369.68px;font-size:11.9px;color:#333;font-weight:normal;letter-spacing:0.25px;">2,535</div>
<div class="a" style="left:1029.5px;top:364px;width:12px;height:20px;background:#d6ecbc;"></div>
<div class="t" style="left:1039.5px;top:369.68px;font-size:11.9px;color:#333;font-weight:normal;letter-spacing:0.25px;">13%</div>
<div class="a" style="left:1125px;top:364px;width:5px;height:20px;background:#fde8ae;"></div>
<div class="t" style="left:1135px;top:369.68px;font-size:11.9px;color:#333;font-weight:normal;letter-spacing:0.25px;">5.2%</div>
<div class="t" style="left:1230px;top:369.68px;font-size:11.9px;color:#333;font-weight:normal;letter-spacing:0.25px;">61</div>
<svg style="left:1286px;top:367px" width="11" height="15" viewBox="0 0 11 15"><path d="M5.5,0.5 V13 M1,8.5 L5.5,13.2 L10,8.5" fill="none" stroke="#e43a3a" stroke-width="2.6"/></svg>
<div class="a" style="left:1315px;top:364px;width:14px;height:20px;background:#fdd8d5;"></div>
<div class="t" style="left:1325px;top:369.68px;font-size:11.9px;color:#333;font-weight:normal;letter-spacing:0.25px;">166</div>
<div class="a" style="left:1408px;top:364px;width:14px;height:20px;background:#cce0f6;"></div>
<div class="t" style="left:1418px;top:369.68px;font-size:11.9px;color:#333;font-weight:normal;letter-spacing:0.25px;">1,539</div>
<div class="a" style="left:1501px;top:364px;width:14px;height:20px;background:#d6ecbc;"></div>
<div class="t" style="left:1511px;top:369.68px;font-size:11.9px;color:#333;font-weight:normal;letter-spacing:0.25px;">15%</div>
<div class="t" style="left:11.199999999999989px;top:415.98px;font-size:15.2px;color:#51576b;font-weight:normal;letter-spacing:0px;transform:scaleX(0.9400);transform-origin:0 0;">I AM USUALLY THE FIRST AMONG MY FRIENDS T...</div>
<div class="a" style="left:377px;top:414px;width:20px;height:20px;background:#fdd8d5;"></div>
<div class="t" style="left:386px;top:419.68px;font-size:11.9px;color:#333;font-weight:normal;letter-spacing:0.25px;">5,068</div>
<div class="a" style="left:469px;top:414px;width:20px;height:20px;background:#cce0f6;"></div>
<div class="t" style="left:479px;top:419.68px;font-size:11.9px;color:#333;font-weight:normal;letter-spacing:0.25px;">50,266</div>
<div class="a" style="left:562px;top:414px;width:20px;height:20px;background:#d6ecbc;"></div>
<div class="t" style="left:572px;top:419.68px;font-size:11.9px;color:#333;font-weight:normal;letter-spacing:0.25px;">21.9%</div>
<div class="a" style="left:655px;top:414px;width:91px;height:20px;background:#fde8ae;"></div>
<div class="t" style="left:665px;top:419.68px;font-size:11.9px;color:#333;font-weight:normal;letter-spacing:0.25px;">100%</div>
<div class="t" style="left:758px;top:419.68px;font-size:11.9px;color:#333;font-weight:normal;letter-spacing:0.25px;">100</div>
<div class="a" style="left:841px;top:414px;width:25px;height:20px;background:#fdd8d5;"></div>
<div class="t" style="left:851px;top:419.68px;font-size:11.9px;color:#333;font-weight:normal;letter-spacing:0.25px;">620</div>
<div class="a" style="left:935px;top:414px;width:25px;height:20px;background:#cce0f6;"></div>
<div class="t" style="left:945px;top:419.68px;font-size:11.9px;color:#333;font-weight:normal;letter-spacing:0.25px;">5,324</div>
<div class="a" style="left:1029.5px;top:414px;width:25px;height:20px;background:#d6ecbc;"></div>
<div class="t" style="left:1039.5px;top:419.68px;font-size:11.9px;color:#333;font-weight:normal;letter-spacing:0.25px;">27.2%</div>
<div class="a" style="left:1125px;top:414px;width:10px;height:20px;background:#fde8ae;"></div>
<div class="t" style="left:1135px;top:419.68px;font-size:11.9px;color:#333;font-weight:normal;letter-spacing:0.25px;">10.6%</div>
<div class="t" style="left:1230px;top:419.68px;font-size:11.9px;color:#333;font-weight:bold;letter-spacing:0.25px;">124</div>
<svg style="left:1286px;top:417px" width="11" height="15" viewBox="0 0 11 15"><path d="M5.5,14.5 V2 M1,6.5 L5.5,1.8 L10,6.5" fill="none" stroke="#17a31c" stroke-width="2.6"/></svg>
<div class="a" style="left:1315px;top:414px;width:21px;height:20px;background:#fdd8d5;"></div>
<div class="t" style="left:1325px;top:419.68px;font-size:11.9px;color:#333;font-weight:normal;letter-spacing:0.25px;">288</div>
<div class="a" style="left:1408px;top:414px;width:21px;height:20px;background:#cce0f6;"></div>
<div class="t" style="left:1418px;top:419.68px;font-size:11.9px;color:#333;font-weight:normal;letter-spacing:0.25px;">2,421</div>
<div class="a" style="left:1501px;top:414px;width:21px;height:20px;background:#d6ecbc;"></div>
<div class="t" style="left:1511px;top:419.68px;font-size:11.9px;color:#333;font-weight:normal;letter-spacing:0.25px;">23.5%</div>
<div class="t" style="left:11.199999999999989px;top:465.98px;font-size:15.2px;color:#51576b;font-weight:normal;letter-spacing:0px;transform:scaleX(0.9262);transform-origin:0 0;">I EAT SEVERAL SMALL MEALS THROUGHOUT THE ...</div>
<div class="a" style="left:377px;top:464px;width:34px;height:20px;background:#fdd8d5;"></div>
<div class="t" style="left:386px;top:469.68px;font-size:11.9px;color:#333;font-weight:normal;letter-spacing:0.25px;">9,568</div>
<div class="a" style="left:469px;top:464px;width:35px;height:20px;background:#cce0f6;"></div>
<div class="t" style="left:479px;top:469.68px;font-size:11.9px;color:#333;font-weight:normal;letter-spacing:0.25px;">88,105</div>
<div class="a" style="left:562px;top:464px;width:35px;height:20px;background:#d6ecbc;"></div>
<div class="t" style="left:572px;top:469.68px;font-size:11.9px;color:#333;font-weight:normal;letter-spacing:0.25px;">38.3%</div>
<div class="a" style="left:655px;top:464px;width:91px;height:20px;background:#fde8ae;"></div>
<div class="t" style="left:665px;top:469.68px;font-size:11.9px;color:#333;font-weight:normal;letter-spacing:0.25px;">100%</div>
<div class="t" style="left:758px;top:469.68px;font-size:11.9px;color:#333;font-weight:normal;letter-spacing:0.25px;">100</div>
<div class="a" style="left:841px;top:464px;width:39px;height:20px;background:#fdd8d5;"></div>
<div class="t" style="left:851px;top:469.68px;font-size:11.9px;color:#333;font-weight:normal;letter-spacing:0.25px;">985</div>
<div class="a" style="left:935px;top:464px;width:39px;height:20px;background:#cce0f6;"></div>
<div class="t" style="left:945px;top:469.68px;font-size:11.9px;color:#333;font-weight:normal;letter-spacing:0.25px;">8,309</div>
<div class="a" style="left:1029.5px;top:464px;width:40px;height:20px;background:#d6ecbc;"></div>
<div class="t" style="left:1039.5px;top:469.68px;font-size:11.9px;color:#333;font-weight:normal;letter-spacing:0.25px;">42.5%</div>
<div class="a" style="left:1125px;top:464px;width:9px;height:20px;background:#fde8ae;"></div>
<div class="t" style="left:1135px;top:469.68px;font-size:11.9px;color:#333;font-weight:normal;letter-spacing:0.25px;">9.4%</div>
<div class="t" style="left:1230px;top:469.68px;font-size:11.9px;color:#333;font-weight:bold;letter-spacing:0.25px;">111</div>
<svg style="left:1286px;top:467px" width="11" height="15" viewBox="0 0 11 15"><path d="M5.5,14.5 V2 M1,6.5 L5.5,1.8 L10,6.5" fill="none" stroke="#17a31c" stroke-width="2.6"/></svg>
<div class="a" style="left:1315px;top:464px;width:42px;height:20px;background:#fdd8d5;"></div>
<div class="t" style="left:1325px;top:469.68px;font-size:11.9px;color:#333;font-weight:normal;letter-spacing:0.25px;">496</div>
<div class="a" style="left:1408px;top:464px;width:42px;height:20px;background:#cce0f6;"></div>
<div class="t" style="left:1418px;top:469.68px;font-size:11.9px;color:#333;font-weight:normal;letter-spacing:0.25px;">4,709</div>
<div class="a" style="left:1501px;top:464px;width:42px;height:20px;background:#d6ecbc;"></div>
<div class="t" style="left:1511px;top:469.68px;font-size:11.9px;color:#333;font-weight:normal;letter-spacing:0.25px;">45.8%</div>
<div class="t" style="left:11.199999999999989px;top:515.98px;font-size:15.2px;color:#51576b;font-weight:normal;letter-spacing:0px;transform:scaleX(0.9063);transform-origin:0 0;">I EAT THE FOODS I LIKE REGARDLESS OF CALORIE...</div>
<div class="a" style="left:377px;top:514px;width:55px;height:20px;background:#fdd8d5;"></div>
<div class="t" style="left:386px;top:519.68px;font-size:11.9px;color:#333;font-weight:normal;letter-spacing:0.25px;">14,241</div>
<div class="a" style="left:469px;top:514px;width:56px;height:20px;background:#cce0f6;"></div>
<div class="t" style="left:479px;top:519.68px;font-size:11.9px;color:#333;font-weight:normal;letter-spacing:0.25px;">140,355</div>
<div class="a" style="left:562px;top:514px;width:56px;height:20px;background:#d6ecbc;"></div>
<div class="t" style="left:572px;top:519.68px;font-size:11.9px;color:#333;font-weight:normal;letter-spacing:0.25px;">61.1%</div>
<div class="a" style="left:655px;top:514px;width:91px;height:20px;background:#fde8ae;"></div>
<div class="t" style="left:665px;top:519.68px;font-size:11.9px;color:#333;font-weight:normal;letter-spacing:0.25px;">100%</div>
<div class="t" style="left:758px;top:519.68px;font-size:11.9px;color:#333;font-weight:normal;letter-spacing:0.25px;">100</div>
<div class="a" style="left:841px;top:514px;width:54px;height:20px;background:#fdd8d5;"></div>
<div class="t" style="left:851px;top:519.68px;font-size:11.9px;color:#333;font-weight:normal;letter-spacing:0.25px;">1,365</div>
<div class="a" style="left:935px;top:514px;width:54px;height:20px;background:#cce0f6;"></div>
<div class="t" style="left:945px;top:519.68px;font-size:11.9px;color:#333;font-weight:normal;letter-spacing:0.25px;">11,396</div>
<div class="a" style="left:1029.5px;top:514px;width:55px;height:20px;background:#d6ecbc;"></div>
<div class="t" style="left:1039.5px;top:519.68px;font-size:11.9px;color:#333;font-weight:normal;letter-spacing:0.25px;">58.3%</div>
<div class="a" style="left:1125px;top:514px;width:8px;height:20px;background:#fde8ae;"></div>
<div class="t" style="left:1135px;top:519.68px;font-size:11.9px;color:#333;font-weight:normal;letter-spacing:0.25px;">8.1%</div>
<div class="t" style="left:1230px;top:519.68px;font-size:11.9px;color:#333;font-weight:normal;letter-spacing:0.25px;">95</div>
<svg style="left:1286px;top:517px" width="11" height="15" viewBox="0 0 11 15"><path d="M5.5,0.5 V13 M1,8.5 L5.5,13.2 L10,8.5" fill="none" stroke="#e43a3a" stroke-width="2.6"/></svg>
<div class="a" style="left:1315px;top:514px;width:53px;height:20px;background:#fdd8d5;"></div>
<div class="t" style="left:1325px;top:519.68px;font-size:11.9px;color:#333;font-weight:normal;letter-spacing:0.25px;">702</div>
<div class="a" style="left:1408px;top:514px;width:53px;height:20px;background:#cce0f6;"></div>
<div class="t" style="left:1418px;top:519.68px;font-size:11.9px;color:#333;font-weight:normal;letter-spacing:0.25px;">6,020</div>
<div class="a" style="left:1501px;top:514px;width:53px;height:20px;background:#d6ecbc;"></div>
<div class="t" style="left:1511px;top:519.68px;font-size:11.9px;color:#333;font-weight:normal;letter-spacing:0.25px;">58.5%</div>
<div class="t" style="left:11.199999999999989px;top:565.98px;font-size:15.2px;color:#51576b;font-weight:normal;letter-spacing:0px;transform:scaleX(0.9277);transform-origin:0 0;">I ENJOY EATING FOREIGN FOODS (ATTITUDES/OP...</div>
<div class="a" style="left:377px;top:564px;width:42px;height:20px;background:#fdd8d5;"></div>
<div class="t" style="left:386px;top:569.68px;font-size:11.9px;color:#333;font-weight:normal;letter-spacing:0.25px;">11,356</div>
<div class="a" style="left:469px;top:564px;width:43px;height:20px;background:#cce0f6;"></div>
<div class="t" style="left:479px;top:569.68px;font-size:11.9px;color:#333;font-weight:normal;letter-spacing:0.25px;">107,922</div>
<div class="a" style="left:562px;top:564px;width:43px;height:20px;background:#d6ecbc;"></div>
<div class="t" style="left:572px;top:569.68px;font-size:11.9px;color:#333;font-weight:normal;letter-spacing:0.25px;">47%</div>
<div class="a" style="left:655px;top:564px;width:91px;height:20px;background:#fde8ae;"></div>
<div class="t" style="left:665px;top:569.68px;font-size:11.9px;color:#333;font-weight:normal;letter-spacing:0.25px;">100%</div>
<div class="t" style="left:758px;top:569.68px;font-size:11.9px;color:#333;font-weight:normal;letter-spacing:0.25px;">100</div>
<div class="a" style="left:841px;top:564px;width:64px;height:20px;background:#fdd8d5;"></div>
<div class="t" style="left:851px;top:569.68px;font-size:11.9px;color:#333;font-weight:normal;letter-spacing:0.25px;">1,583</div>
<div class="a" style="left:935px;top:564px;width:64px;height:20px;background:#cce0f6;"></div>
<div class="t" style="left:945px;top:569.68px;font-size:11.9px;color:#333;font-weight:normal;letter-spacing:0.25px;">13,575</div>
<div class="a" style="left:1029.5px;top:564px;width:65px;height:20px;background:#d6ecbc;"></div>
<div class="t" style="left:1039.5px;top:569.68px;font-size:11.9px;color:#333;font-weight:normal;letter-spacing:0.25px;">69.4%</div>
<div class="a" style="left:1125px;top:564px;width:12px;height:20px;background:#fde8ae;"></div>
<div class="t" style="left:1135px;top:569.68px;font-size:11.9px;color:#333;font-weight:normal;letter-spacing:0.25px;">12.6%</div>
<div class="t" style="left:1230px;top:569.68px;font-size:11.9px;color:#333;font-weight:bold;letter-spacing:0.25px;">148</div>
<svg style="left:1286px;top:567px" width="11" height="15" viewBox="0 0 11 15"><path d="M5.5,14.5 V2 M1,6.5 L5.5,1.8 L10,6.5" fill="none" stroke="#17a31c" stroke-width="2.6"/></svg>
<div class="a" style="left:1315px;top:564px;width:56px;height:20px;background:#fdd8d5;"></div>
<div class="t" style="left:1325px;top:569.68px;font-size:11.9px;color:#333;font-weight:normal;letter-spacing:0.25px;">743</div>
<div class="a" style="left:1408px;top:564px;width:56px;height:20px;background:#cce0f6;"></div>
<div class="t" style="left:1418px;top:569.68px;font-size:11.9px;color:#333;font-weight:normal;letter-spacing:0.25px;">6,278</div>
<div class="a" style="left:1501px;top:564px;width:56px;height:20px;background:#d6ecbc;"></div>
<div class="t" style="left:1511px;top:569.68px;font-size:11.9px;color:#333;font-weight:normal;letter-spacing:0.25px;">61%</div>
<div class="a" style="left:376px;top:599px;width:1174px;height:12px;background:#d0dff0;"></div>
<div class="a" style="left:397px;top:602px;width:471px;height:5px;background:#a9bcd6;border-radius:3px"></div>
<svg style="left:383px;top:602px" width="6" height="7" viewBox="0 0 6 7"><polygon points="5,0.5 5,6.5 0.5,3.5" fill="#b8c8dc"/></svg>
<svg style="left:1537px;top:602px" width="6" height="7" viewBox="0 0 6 7"><polygon points="1,0.5 1,6.5 5.5,3.5" fill="#b8c8dc"/></svg>
</div>
</body></html>
